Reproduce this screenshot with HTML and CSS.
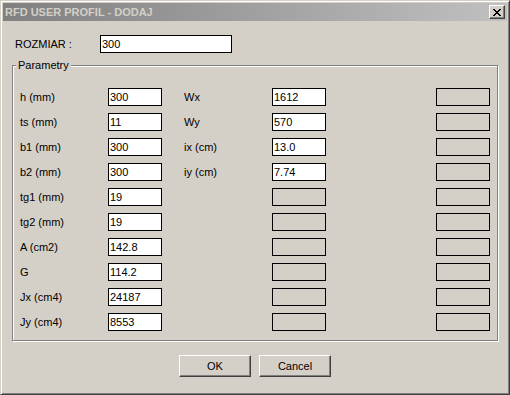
FILE: index.html
```html
<!DOCTYPE html>
<html lang="pl">
  <head>
    <meta charset="UTF-8" />
    <title>RFD USER PROFIL - DODAJ</title>
    <link rel="stylesheet" href="styles.css">
  </head>
  <body>
    <div class="window">
      <!-- title bar -->
      <div class="title-bar">
        <span class="title-text">RFD USER PROFIL - DODAJ</span>
        <button class="close-btn" aria-label="close">
          <svg width="8" height="7" viewBox="0 0 8 7" shape-rendering="crispEdges">
            <path fill="#000" d="M0 0h2v1h-2z M6 0h2v1h-2z M1 1h2v1h-2z M5 1h2v1h-2z M2 2h4v1h-4z M3 3h2v1h-2z M2 4h4v1h-4z M1 5h2v1h-2z M5 5h2v1h-2z M0 6h2v1h-2z M6 6h2v1h-2z"/>
          </svg>
        </button>
      </div>

      <div class="content">
        <div class="size-row">
          <label class="size-label">ROZMIAR :</label>
          <input class="field field-wide" type="text" value="300">
        </div>

        <!-- parametry -->
        <div class="group">
          <span class="legend">Parametry</span>
          <div class="param-grid">
            <span class="lbl">h (mm)</span><input class="field" type="text" value="300">
            <span class="lbl lbl-2">Wx</span><input class="field" type="text" value="1612">
            <input class="field col-c" type="text" disabled>

            <span class="lbl">ts (mm)</span><input class="field" type="text" value="11">
            <span class="lbl lbl-2">Wy</span><input class="field" type="text" value="570">
            <input class="field col-c" type="text" disabled>

            <span class="lbl">b1 (mm)</span><input class="field" type="text" value="300">
            <span class="lbl lbl-2">ix (cm)</span><input class="field" type="text" value="13.0">
            <input class="field col-c" type="text" disabled>

            <span class="lbl">b2 (mm)</span><input class="field" type="text" value="300">
            <span class="lbl lbl-2">iy (cm)</span><input class="field" type="text" value="7.74">
            <input class="field col-c" type="text" disabled>

            <span class="lbl">tg1 (mm)</span><input class="field" type="text" value="19">
            <span class="lbl lbl-2"></span><input class="field" type="text" disabled>
            <input class="field col-c" type="text" disabled>

            <span class="lbl">tg2 (mm)</span><input class="field" type="text" value="19">
            <span class="lbl lbl-2"></span><input class="field" type="text" disabled>
            <input class="field col-c" type="text" disabled>

            <span class="lbl">A (cm2)</span><input class="field" type="text" value="142.8">
            <span class="lbl lbl-2"></span><input class="field" type="text" disabled>
            <input class="field col-c" type="text" disabled>

            <span class="lbl">G</span><input class="field" type="text" value="114.2">
            <span class="lbl lbl-2"></span><input class="field" type="text" disabled>
            <input class="field col-c" type="text" disabled>

            <span class="lbl">Jx (cm4)</span><input class="field" type="text" value="24187">
            <span class="lbl lbl-2"></span><input class="field" type="text" disabled>
            <input class="field col-c" type="text" disabled>

            <span class="lbl">Jy (cm4)</span><input class="field" type="text" value="8553">
            <span class="lbl lbl-2"></span><input class="field" type="text" disabled>
            <input class="field col-c" type="text" disabled>
          </div>
        </div>

        <div class="btn-row">
          <button class="btn">OK</button>
          <button class="btn">Cancel</button>
        </div>
      </div>
    </div>
  </body>
</html>
```

FILE: styles.css
```css
/*global*/
* {
  margin: 0;
  padding: 0;
  box-sizing: border-box;
}

html,
body {
  background-color: #d4d0c8;
  font-family: "Liberation Sans", Arial, sans-serif;
  font-size: 11px;
  color: #000;
}

/*window*/
.window {
  width: 510px;
  height: 395px;
  border: 1px solid;
  border-color: #d4d0c8 #404040 #404040 #d4d0c8;
  box-shadow: inset 1px 1px 0 #fff, inset -1px -1px 0 #808080;
  padding: 2px;
  background-color: #d4d0c8;
}

.title-bar {
  height: 18px;
  display: flex;
  align-items: center;
  justify-content: space-between;
  padding: 0 2px;
  background: linear-gradient(to right, #808080, #c0c0c0);
}

.title-text {
  font-weight: bold;
  color: #d4d0c8;
}

.close-btn {
  width: 16px;
  height: 14px;
  display: flex;
  align-items: center;
  justify-content: center;
  background-color: #d4d0c8;
  border: 1px solid;
  border-color: #fff #404040 #404040 #fff;
  box-shadow: inset -1px -1px 0 #808080;
}

/*content*/
.content {
  padding: 14px 9px 0 9px;
}

.size-row {
  display: flex;
  align-items: center;
  padding-left: 3px;
}

.size-label {
  width: 85px;
}

.field {
  width: 54px;
  height: 18px;
  border: 1px solid #000;
  background-color: #fff;
  font-family: "Liberation Sans", Arial, sans-serif;
  font-size: 11px;
  color: #000;
  padding: 0 1px;
  outline: none;
}

.field:disabled {
  border-color: #000;
  background-color: #d4d0c8;
}

.field-wide {
  width: 132px;
}

/*group*/
.group {
  position: relative;
  margin-top: 12px;
  border: 1px solid #808080;
  box-shadow: 1px 1px 0 #fff, inset 1px 1px 0 #fff;
  padding: 22px 7px 9px 7px;
}

.legend {
  position: absolute;
  top: -7px;
  left: 3px;
  padding: 0 2px;
  line-height: 13px;
  background-color: #d4d0c8;
}

.param-grid {
  display: grid;
  grid-template-columns: 88px 54px 110px 54px 110px 54px;
  grid-auto-rows: 18px;
  row-gap: 7px;
  align-items: center;
}

.lbl-2 {
  padding-left: 22px;
}

.col-c {
  grid-column: 6;
}

/*buttons*/
.btn-row {
  display: flex;
  justify-content: center;
  gap: 8px;
  margin-top: 14px;
}

.btn {
  width: 72px;
  height: 22px;
  background-color: #d4d0c8;
  border: 1px solid;
  border-color: #fff #404040 #404040 #fff;
  box-shadow: inset -1px -1px 0 #808080;
  font-family: "Liberation Sans", Arial, sans-serif;
  font-size: 11px;
  color: #000;
}
```
